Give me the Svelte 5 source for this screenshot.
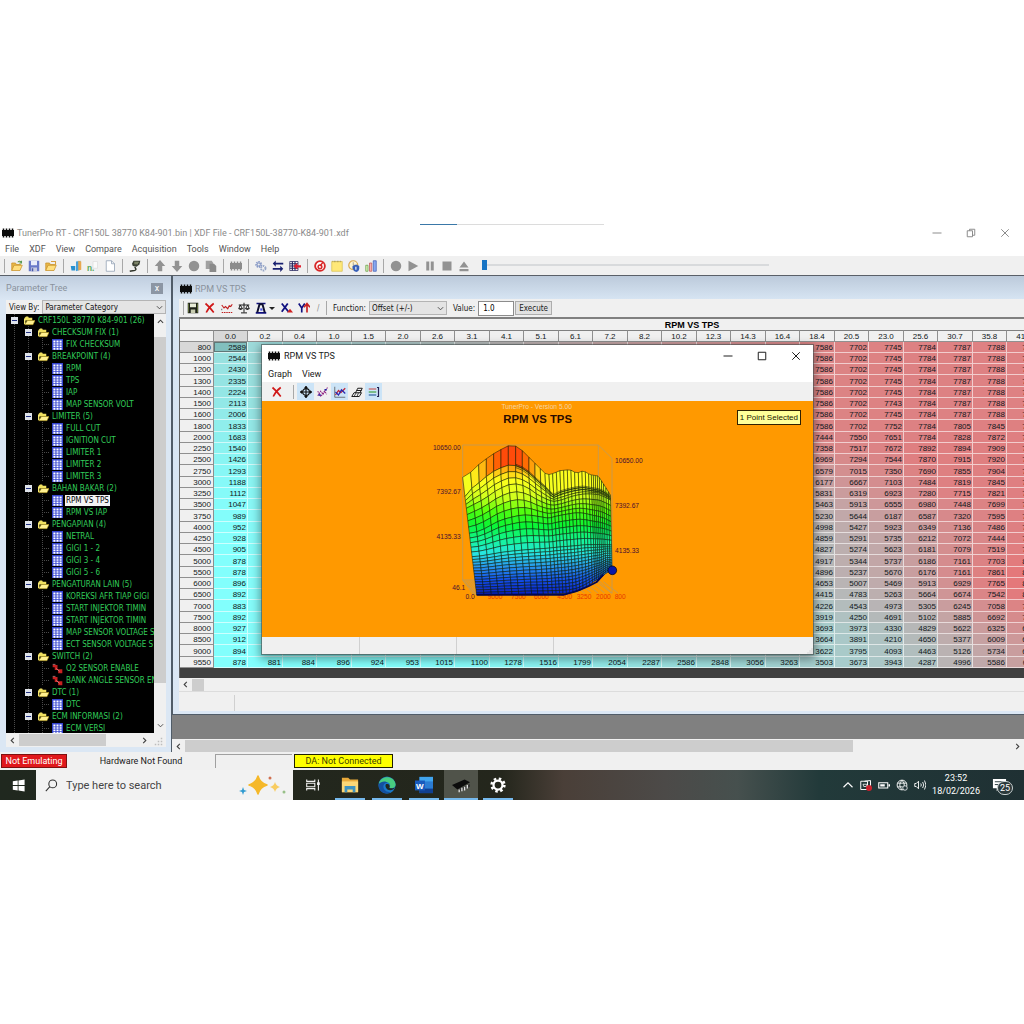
<script lang="ts">
  type TreeItem = { depth: number; text: string; kind: 'folder' | 'table' | 'flag'; selected?: boolean };

  const menus = ['File', 'XDF', 'View', 'Compare', 'Acquisition', 'Tools', 'Window', 'Help'];

  const mainTools = [
    ['open', 'save', 'folder'],
    ['compare', 'replace', 'newdoc'],
    ['plug'],
    ['up', 'down', 'circle', 'copy'],
    ['chipgray'],
    ['gears', 'arrows', 'gridarrow'],
    ['target', 'note', 'info', 'bars'],
    ['circle', 'play', 'pause', 'stop', 'eject']
  ];

  const tree: TreeItem[] = [
    { depth: 0, text: 'CRF150L 38770 K84-901 (26)', kind: 'folder' },
    { depth: 1, text: 'CHECKSUM FIX (1)', kind: 'folder' },
    { depth: 2, text: 'FIX CHECKSUM', kind: 'table' },
    { depth: 1, text: 'BREAKPOINT (4)', kind: 'folder' },
    { depth: 2, text: 'RPM', kind: 'table' },
    { depth: 2, text: 'TPS', kind: 'table' },
    { depth: 2, text: 'IAP', kind: 'table' },
    { depth: 2, text: 'MAP SENSOR VOLT', kind: 'table' },
    { depth: 1, text: 'LIMITER (5)', kind: 'folder' },
    { depth: 2, text: 'FULL CUT', kind: 'table' },
    { depth: 2, text: 'IGNITION CUT', kind: 'table' },
    { depth: 2, text: 'LIMITER 1', kind: 'table' },
    { depth: 2, text: 'LIMITER 2', kind: 'table' },
    { depth: 2, text: 'LIMITER 3', kind: 'table' },
    { depth: 1, text: 'BAHAN BAKAR (2)', kind: 'folder' },
    { depth: 2, text: 'RPM VS TPS', kind: 'table', selected: true },
    { depth: 2, text: 'RPM VS IAP', kind: 'table' },
    { depth: 1, text: 'PENGAPIAN (4)', kind: 'folder' },
    { depth: 2, text: 'NETRAL', kind: 'table' },
    { depth: 2, text: 'GIGI 1 - 2', kind: 'table' },
    { depth: 2, text: 'GIGI 3 - 4', kind: 'table' },
    { depth: 2, text: 'GIGI 5 - 6', kind: 'table' },
    { depth: 1, text: 'PENGATURAN LAIN (5)', kind: 'folder' },
    { depth: 2, text: 'KOREKSI AFR TIAP GIGI', kind: 'table' },
    { depth: 2, text: 'START INJEKTOR TIMIN', kind: 'table' },
    { depth: 2, text: 'START INJEKTOR TIMIN', kind: 'table' },
    { depth: 2, text: 'MAP SENSOR VOLTAGE S', kind: 'table' },
    { depth: 2, text: 'ECT SENSOR VOLTAGE S', kind: 'table' },
    { depth: 1, text: 'SWITCH (2)', kind: 'folder' },
    { depth: 2, text: 'O2 SENSOR ENABLE', kind: 'flag' },
    { depth: 2, text: 'BANK ANGLE SENSOR EN', kind: 'flag' },
    { depth: 1, text: 'DTC (1)', kind: 'folder' },
    { depth: 2, text: 'DTC', kind: 'table' },
    { depth: 1, text: 'ECM INFORMASI (2)', kind: 'folder' },
    { depth: 2, text: 'ECM VERSI', kind: 'table' }
  ];

  const tps = ['0.0', '0.2', '0.4', '1.0', '1.5', '2.0', '2.6', '3.1', '4.1', '5.1', '6.1', '7.2',
    '8.2', '10.2', '12.3', '14.3', '16.4', '18.4', '20.5', '23.0', '25.6', '30.7', '35.8', '41.0'];

  // rpm, value at 0.0, then the values from 18.4 up
  const samples = [
    [800, 2589, 7586, 7702, 7745, 7784, 7787, 7788, 7790],
    [1000, 2544, 7586, 7702, 7745, 7784, 7787, 7788, 7790],
    [1200, 2430, 7586, 7702, 7745, 7784, 7787, 7788, 7790],
    [1300, 2335, 7586, 7702, 7745, 7784, 7787, 7788, 7790],
    [1400, 2224, 7586, 7702, 7745, 7784, 7787, 7788, 7790],
    [1500, 2113, 7586, 7702, 7743, 7784, 7787, 7788, 7790],
    [1600, 2006, 7586, 7702, 7745, 7784, 7787, 7788, 7790],
    [1800, 1833, 7586, 7702, 7752, 7784, 7805, 7845, 7860],
    [2000, 1683, 7444, 7550, 7651, 7784, 7828, 7872, 7880],
    [2250, 1540, 7358, 7517, 7672, 7892, 7894, 7909, 7915],
    [2500, 1426, 6969, 7294, 7544, 7870, 7915, 7920, 7930],
    [2750, 1293, 6579, 7015, 7350, 7690, 7855, 7904, 7925],
    [3000, 1188, 6177, 6667, 7103, 7484, 7819, 7845, 7900],
    [3250, 1112, 5831, 6319, 6923, 7280, 7715, 7821, 7880],
    [3500, 1047, 5463, 5913, 6555, 6980, 7448, 7699, 7860],
    [3750, 989, 5230, 5644, 6187, 6587, 7320, 7595, 7850],
    [4000, 952, 4998, 5427, 5923, 6349, 7136, 7486, 7840],
    [4250, 928, 4859, 5291, 5735, 6212, 7072, 7444, 7850],
    [4500, 905, 4827, 5274, 5623, 6181, 7079, 7519, 7960],
    [5000, 878, 4917, 5344, 5737, 6186, 7161, 7703, 8120],
    [5500, 878, 4896, 5237, 5670, 6176, 7161, 7861, 8310],
    [6000, 896, 4653, 5007, 5469, 5913, 6929, 7765, 8290],
    [6500, 892, 4415, 4783, 5263, 5664, 6674, 7542, 8130],
    [7000, 883, 4226, 4543, 4973, 5305, 6245, 7058, 7640],
    [7500, 892, 3919, 4250, 4691, 5102, 5885, 6692, 7250],
    [8000, 927, 3693, 3973, 4330, 4829, 5622, 6325, 6890],
    [8500, 912, 3664, 3891, 4210, 4650, 5377, 6009, 6540],
    [9000, 894, 3622, 3795, 4093, 4463, 5126, 5734, 6270],
    [9550, 878, 3503, 3673, 3943, 4287, 4996, 5586, 6110]
  ];
  const lastMiddle = [881, 884, 896, 924, 953, 1015, 1100, 1278, 1516, 1799, 2054, 2287, 2586, 2848, 3056, 3263];

  const rows = samples.map(([rpm, first, ...rest]) => {
    const middle = lastMiddle.map((v, i) =>
      rpm === 9550 ? v : Math.round(first + ((rest[0] - first) * (i + 1)) / 17)
    );
    return { rpm, values: [first, ...middle, ...rest] };
  });

  function shade(v: number) {
    const t = Math.min(1, Math.max(0, (v - 878) / 7400));
    const mix = (a: number, b: number) => Math.round(a + (b - a) * t);
    return `rgb(${mix(130, 228)}, ${mix(255, 120)}, ${mix(253, 122)})`;
  }

  // 3D surface: height profiles across the plot, back to front
  const px = [98, 125, 150, 175, 200, 240, 265, 290, 320, 350, 365, 390, 420, 440, 460, 480, 505, 520, 540];
  const profiles = [
    [232, 215, 190, 172, 155, 135, 140, 165, 195, 225, 222, 212, 209, 220, 212, 224, 228, 252, 285],
    [290, 262, 245, 225, 208, 194, 198, 212, 240, 268, 288, 276, 268, 264, 262, 266, 270, 276, 290],
    [325, 312, 300, 285, 268, 252, 252, 262, 285, 300, 305, 300, 290, 285, 282, 282, 284, 290, 300],
    [400, 395, 385, 372, 360, 350, 345, 345, 350, 355, 350, 345, 340, 338, 340, 345, 350, 355, 365],
    [470, 468, 464, 460, 456, 452, 450, 448, 446, 444, 442, 440, 438, 436, 434, 434, 434, 434, 435],
    [530, 530, 528, 526, 524, 522, 520, 520, 518, 516, 514, 512, 508, 504, 500, 494, 488, 480, 478],
    [585, 585, 584, 584, 583, 583, 582, 582, 582, 581, 581, 580, 576, 568, 558, 545, 532, 520, 510]
  ];
  const steps = [1, 3, 4, 5, 7, 7];
  const cols = [98, 122, 146, 169, 191, 213, 235, 257, 277, 297, 315, 331, 345, 357, 368, 379, 390, 401, 412,
    423, 434, 445, 456, 466, 476, 484, 490, 496, 502, 508, 514, 520, 527, 534, 540];

  function sample(curve: number[], x: number) {
    let i = 0;
    while (i < px.length - 2 && px[i + 1] < x) i++;
    const t = (x - px[i]) / (px[i + 1] - px[i]);
    return curve[i] + (curve[i + 1] - curve[i]) * t;
  }

  const stops: [number, number[]][] = [
    [172, [255, 75, 10]], [192, [255, 120, 0]], [215, [255, 195, 20]], [240, [255, 255, 30]],
    [290, [210, 255, 30]], [330, [90, 255, 10]], [375, [10, 245, 50]], [420, [20, 245, 150]],
    [460, [40, 230, 225]], [500, [40, 150, 235]], [540, [20, 80, 235]], [585, [10, 30, 190]]
  ];

  function heat(y: number) {
    if (y <= stops[0][0]) return `rgb(${stops[0][1]})`;
    for (let i = 1; i < stops.length; i++) {
      if (y <= stops[i][0]) {
        const [y0, a] = stops[i - 1];
        const [y1, b] = stops[i];
        return `rgb(${a.map((c, k) => Math.round(c + ((b[k] - c) * (y - y0)) / (y1 - y0)))})`;
      }
    }
    return `rgb(${stops[stops.length - 1][1]})`;
  }

  const mesh: { x: number; y: number }[][] = [];
  profiles.slice(0, -1).forEach((curve, p) => {
    for (let s = 0; s < steps[p]; s++) {
      mesh.push(cols.map((x) => {
        const y = sample(curve, x) + ((sample(profiles[p + 1], x) - sample(curve, x)) * s) / steps[p];
        return { x, y };
      }));
    }
  });
  mesh.push(cols.map((x) => ({ x, y: sample(profiles[6], x) })));

  function lean(x: number, y: number) {
    const shift = 42 - ((x - 98) / 442) * 34;
    return Math.round((x + (shift * Math.max(0, y - 232)) / 353) * 10) / 10;
  }

  const cells = mesh.slice(0, -1).flatMap((line, r) =>
    line.slice(0, -1).map((_, c) => {
      const q = [mesh[r][c], mesh[r][c + 1], mesh[r + 1][c + 1], mesh[r + 1][c]];
      return {
        points: q.map((p) => `${lean(p.x, p.y)},${p.y.toFixed(1)}`).join(' '),
        fill: heat((q[0].y + q[1].y + q[2].y + q[3].y) / 4)
      };
    })
  );

  // folds where the surface turns away behind the ridge
  const folds = [0, 5, 10].map((d) =>
    cols.filter((x) => x > 250).map((x) => {
      const y = sample(profiles[1], x) + d - 4;
      return `${lean(x, y)},${y.toFixed(1)}`;
    }).join(' ')
  );

  const rpmLabels = [
    { x: 173, t: '9000' }, { x: 243, t: '7500' }, { x: 312, t: '6000' },
    { x: 382, t: '4500' }, { x: 440, t: '3250' }, { x: 498, t: '2000' }, { x: 554, t: '800' }
  ];

  let offset = $state('1.0');
  let position = $state(0);
</script>

{#snippet icon(name: string)}
  <svg class="icon" viewBox="0 0 16 16" aria-hidden="true">
    {#if name === 'open' || name === 'folder'}
      <path d="M1 14V4h5l1 2h6v3" fill="#e8b84a" stroke="#c8922a" />
      <path d="M1 14l3-7h11l-3 7z" fill="#ffdf7e" stroke="#c8922a" />
      {#if name === 'open'}
        <path d="M9 3q3-3 5 1M14 1v3h-3" fill="none" stroke="#5a9a50" stroke-width="1.4" />
      {:else}
        <path d="M8 2h6v5" fill="none" stroke="#d8a040" stroke-width="1.4" />
      {/if}
    {:else if name === 'save'}
      <path d="M1 1h14v14H1z" fill="#6878c8" />
      <path d="M4 1h8v6H4z" fill="#e8ecfa" /><path d="M4 10h8v5H4z" fill="#c8cce0" /><path d="M5 11h2v4H5z" fill="#4858a8" />
    {:else if name === 'compare'}
      <path d="M8 2l6-1v12l-6 2z" fill="#48a0d8" /><path d="M11 1l4 1v11l-4 1z" fill="#e8a850" />
      <path d="M1 8h6v6H2z" fill="#2890d0" />
    {:else if name === 'replace'}
      <path d="M8 2h6v9H8z" fill="#fafafa" stroke="#ddd" />
      <text x="0" y="14" font-size="11" font-weight="bold" fill="#58a858" font-family="Liberation Sans">n.</text>
    {:else if name === 'newdoc'}
      <path d="M3 1h7l4 4v10H3z" fill="#fff" stroke="#8c9cb0" /><path d="M10 1v4h4" fill="none" stroke="#8c9cb0" />
    {:else if name === 'plug'}
      <path d="M6 1h9l-1 5-4 3-5-1-1-3z" fill="#3a4034" /><path d="M7 3h6M7 5h5" stroke="#b0b890" />
      <path d="M8 9c0 3 2 2 1 4s-4 1-8 2" fill="none" stroke="#30342a" stroke-width="2" />
    {:else if name === 'up'}
      <path d="M8 0l7 8h-4v7H5V8H1z" fill="#929292" />
    {:else if name === 'down'}
      <path d="M8 16l7-8h-4V1H5v7H1z" fill="#929292" />
    {:else if name === 'circle'}
      <circle cx="8" cy="8" r="7" fill="#929292" />
    {:else if name === 'copy'}
      <path d="M1 1h8l2 3v8H1z" fill="#a0a0a0" /><path d="M6 5h6l3 3v8H6z" fill="#8a8a8a" />
    {:else if name === 'chipgray' || name === 'chip'}
      <path d="M0 4h16v8H0z M1 2h2v12H1z M5 2h2v12H5z M9 2h2v12H9z M13 2h2v12h-2z" fill={name === 'chip' ? '#0c0c0c' : '#8c8c8c'} />
    {:else if name === 'gears'}
      <circle cx="5" cy="6" r="3.4" fill="none" stroke="#8a9cc8" stroke-width="2.4" stroke-dasharray="2 1" />
      <circle cx="11" cy="11" r="3" fill="none" stroke="#98a8c8" stroke-width="2.6" stroke-dasharray="2 1" />
      <circle cx="5" cy="6" r="2" fill="none" stroke="#6a80b8" />
    {:else if name === 'arrows'}
      <path d="M1 4.5l4-4v3h10v2.500H5v3zM15 11.500l-4-4v3H1v2.500h10v3z" fill="#182070" />
    {:else if name === 'gridarrow'}
      <path d="M1 2h11v12H1z" fill="#fff" stroke="#282860" /><path d="M1 5h11M1 8h11M1 11h11M4.500 2v12M8 2v12" stroke="#282860" stroke-width="1.500" />
      <path d="M6 8l5-4v3h5v3h-5v3z" fill="#e02030" />
    {:else if name === 'target'}
      <circle cx="8" cy="8" r="6.500" fill="#fff" stroke="#d82828" stroke-width="2.500" />
      <circle cx="8" cy="9" r="2.500" fill="none" stroke="#d82828" stroke-width="2" /><path d="M8 8l4-5" stroke="#d82828" stroke-width="2" />
    {:else if name === 'note'}
      <path d="M1 2h14v13H1z" fill="#ffe878" stroke="#d8c050" /><path d="M2 2h12" stroke="#a89858" stroke-width="2" stroke-dasharray="1 1" />
    {:else if name === 'info'}
      <circle cx="7" cy="7" r="6" fill="#fff4d0" stroke="#d8a850" stroke-width="1.600" />
      <path d="M7 3v4h3" stroke="#888" fill="none" /><path d="M6 8l5-2 4 2v3q0 4-4 5-4-1-5-5z" fill="#3860b8" /><path d="M10.500 9v4" stroke="#fff" stroke-width="1.500" />
    {:else if name === 'bars'}
      <path d="M1 7h3v8H1z" fill="#d8f0b8" stroke="#68a048" /><path d="M6 4h3v11H6z" fill="#f8b0b0" stroke="#c05858" /><path d="M11 1h4v14h-4z" fill="#88a8f0" stroke="#4060b8" />
    {:else if name === 'play'}
      <path d="M2 1l13 7-13 7z" fill="#929292" />
    {:else if name === 'pause'}
      <path d="M3 2h4v12H3zM9 2h4v12H9z" fill="#929292" />
    {:else if name === 'stop'}
      <path d="M2 2h12v12H2z" fill="#929292" />
    {:else if name === 'eject'}
      <path d="M8 2l6 8H2zM2 12h12v3H2z" fill="#929292" />
    {:else if name === 'floppy'}
      <path d="M1 1h14v14H1z" fill="#1c2018" /><path d="M4 2h8v5H4z" fill="#e8ecd8" /><path d="M5 10h6v5H5z" fill="#c8ccb0" />
      <path d="M2 2v12M14 2v12" stroke="#708040" />
    {:else if name === 'cross'}
      <path d="M2 2q6 5 11 12M13 2Q7 6 3 14" stroke="#d01818" stroke-width="2.200" fill="none" />
    {:else if name === 'trend'}
      <path d="M1 4l3 4 2-2 3 3 2-4 2 1 2-3" fill="none" stroke="#c02020" stroke-width="1.500" /><path d="M1 14h14" stroke="#c02020" stroke-width="1.500" stroke-dasharray="2 1" />
      <path d="M1 9v2" stroke="#333" />
    {:else if name === 'scale'}
      <path d="M8 1v13M4 14.500h8M1 4h14M3 4L1 9h5zM13 4l-3 5h5z" fill="none" stroke="#181818" stroke-width="1.300" /><path d="M1 9q2.500 3 5 0zM10 9q2.500 3 5 0z" fill="#181818" />
    {:else if name === 'area'}
      <path d="M2 2h12M1 14.500h14" stroke="#101080" stroke-width="2.200" />
      <path d="M3 14L6 3h4l3 11" fill="none" stroke="#101030" stroke-width="2.600" /><path d="M7 10h3" stroke="#5058e0" stroke-width="3" />
    {:else if name === 'xaxis'}
      <path d="M1 2l9 11M9 2L1 13" stroke="#101080" stroke-width="2.400" /><path d="M8 14h8l-4-5z" fill="#d02020" />
    {:else if name === 'yaxis'}
      <path d="M1 2l4 6v6M9 2L5 8" stroke="#101080" stroke-width="2.200" fill="none" /><path d="M12 14V3M8 7l4-5 4 5" stroke="#c82020" stroke-width="2.200" fill="none" />
    {:else if name === 'move'}
      <circle cx="8" cy="8" r="4.500" fill="none" stroke="#101010" stroke-width="1.500" />
      <path d="M8 0v16M0 8h16" stroke="#101010" stroke-width="1.500" /><path d="M8 0l3 3H5zM8 16l3-3H5zM0 8l3-3v6zM16 8l-3-3v6z" fill="#101010" />
    {:else if name === 'points'}
      <path d="M1 13l4-6 3 4 6-9M1 7l4 7 5-7 3 4" fill="none" stroke="#902080" stroke-width="1.400" stroke-dasharray="2 1" /><path d="M2 12h3M10 5h3" stroke="#2020a0" stroke-width="2" />
    {:else if name === 'lines'}
      <path d="M1 1v14h14" fill="none" stroke="#505050" /><path d="M2 12l4-6 3 3 6-6" fill="none" stroke="#c02030" stroke-width="1.600" /><path d="M2 8l4 4 4-7 5 5" fill="none" stroke="#2828b0" stroke-width="1.600" />
    {:else if name === 'plane'}
      <path d="M1 14l3-5h10l-3 5zM6 9l3-6h6l-3 6M8 6h6" fill="none" stroke="#181818" stroke-width="1.300" /><path d="M7 9l-3 5M10 9l-2 5" stroke="#181818" />
    {:else if name === 'legend'}
      <path d="M1 4h10" stroke="#c86060" stroke-width="1.600" /><path d="M1 8h10" stroke="#40a040" stroke-width="1.600" /><path d="M1 12h10" stroke="#3060a0" stroke-width="1.600" /><path d="M12 2h2v12h-2" fill="none" stroke="#202050" stroke-width="1.600" />
    {:else if name === 'treefolder'}
      <path d="M1 4l2-2h3l1 2h5v4H1z" fill="#f0e060" /><path d="M1 14l4-6h11l-3 6z" fill="#fff090" stroke="#a89020" /><path d="M1 5v8" stroke="#f8e870" stroke-width="2" />
    {:else if name === 'treetable'}
      <path d="M0 0h16v16H0z" fill="#3444d0" />
      <path d="M2 2h3v3H2zM6.500 2h3v3h-3zM11 2h3v3h-3zM2 6h3v2.500H2zM6.500 6h3v2.500h-3zM11 6h3v2.500h-3zM2 9.500h3V12H2zM6.500 9.500h3V12h-3zM11 9.500h3V12h-3zM2 13h3v2.500H2zM6.500 13h3v2.500h-3zM11 13h3v2.500h-3z" fill="#fff" />
    {:else if name === 'flag'}
      <path d="M1 3h7v6h7v6H9V10H4V6H1z" fill="#c82020" /><path d="M1 2h4M6 8l5 4" stroke="#e8a0a0" />
    {:else if name === 'left'}
      <path d="M11 2L5 8l6 6" fill="none" stroke="#404040" stroke-width="2.500" />
    {:else if name === 'right'}
      <path d="M5 2l6 6-6 6" fill="none" stroke="#404040" stroke-width="2.500" />
    {:else if name === 'chevup'}
      <path d="M2 11l6-6 6 6" fill="none" stroke="#404040" stroke-width="2.500" />
    {:else if name === 'chevdown'}
      <path d="M2 5l6 6 6-6" fill="none" stroke="#404040" stroke-width="2" />
    {:else if name === 'min'}
      <path d="M2 8h12" stroke="currentColor" stroke-width="1.300" />
    {:else if name === 'max'}
      <path d="M3 3h10v10H3z" fill="none" stroke="currentColor" stroke-width="1.300" />
    {:else if name === 'restore'}
      <path d="M3 5h7v8H3zM6 5V3h7v8h-3" fill="none" stroke="currentColor" stroke-width="1.300" />
    {:else if name === 'close'}
      <path d="M3 3l10 10M13 3L3 13" stroke="currentColor" stroke-width="1.300" />
    {:else if name === 'grip'}
      <path d="M13 5h2v2h-2zM9 9h2v2H9zM13 9h2v2h-2zM5 13h2v2H5zM9 13h2v2H9zM13 13h2v2h-2z" fill="#bdbdbd" />
    {/if}
  </svg>
{/snippet}

<div class="desktop">
  <div class="app">
    <div class="progress"><span></span></div>
    <header class="titlebar">
      {@render icon('chip')}
      <span class="title">TunerPro RT - CRF150L 38770 K84-901.bin | XDF File - CRF150L-38770-K84-901.xdf</span>
      <div class="winbuttons">
        <button aria-label="Minimize">{@render icon('min')}</button>
        <button aria-label="Restore">{@render icon('restore')}</button>
        <button aria-label="Close">{@render icon('close')}</button>
      </div>
    </header>

    <nav class="menubar">
      {#each menus as m}
        <button>{m}</button>
      {/each}
    </nav>

    <div class="toolbar">
      {#each mainTools as group}
        <span class="sep"></span>
        {#each group as t}
          <button class="tool" aria-label={t}>{@render icon(t)}</button>
        {/each}
      {/each}
      <input class="slider" type="range" min="0" max="100" bind:value={position} aria-label="Playback position" />
    </div>

    <main class="workspace">
      <aside class="panel">
        <div class="panel-title">
          <span>Parameter Tree</span>
          <button aria-label="Close panel">x</button>
        </div>
        <div class="viewby">
          <label for="viewby">View By:</label>
          <div class="select">
            <select id="viewby"><option>Parameter Category</option></select>
            {@render icon('chevdown')}
          </div>
        </div>
        <div class="tree-area">
          <ul class="tree">
            {#each tree as item}
              <li>
                {#if item.depth > 0}<span class="guide"></span>{/if}
                {#if item.depth > 1}<span class="guide"></span><span class="branch"></span>{:else}
                  <span class="toggle"><i></i></span>
                {/if}
                <span class="node-icon">
                  {@render icon(item.kind === 'folder' ? 'treefolder' : item.kind === 'table' ? 'treetable' : 'flag')}
                </span>
                <span class="label" class:selected={item.selected}>{item.text}</span>
              </li>
            {/each}
          </ul>
          <div class="vscroll">
            {@render icon('chevup')}
            <span class="thumb"></span>
            {@render icon('chevdown')}
          </div>
        </div>
        <div class="hscroll tree-scroll">
          {@render icon('left')}
          <span class="thumb"></span>
          <span class="rest"></span>
          {@render icon('right')}
          {@render icon('grip')}
        </div>
      </aside>

      <section class="mdi">
        <div class="child">
          <div class="child-title">{@render icon('chip')}<span>RPM VS TPS</span></div>
          <div class="child-body">
            <div class="child-tools">
              <span class="sep"></span>
              {#each ['floppy', 'cross', 'trend', 'scale', 'area'] as t}
                <button class="tool" aria-label={t}>{@render icon(t)}</button>
              {/each}
              <span class="caret"></span>
              {#each ['xaxis', 'yaxis'] as t}
                <button class="tool" aria-label={t}>{@render icon(t)}</button>
              {/each}
              <span class="slash">/</span>
              <span class="sep"></span>
              <label for="fn">Function:</label>
              <div class="select fn">
                <select id="fn"><option>Offset (+/-)</option></select>
                {@render icon('chevdown')}
              </div>
              <label for="val">Value:</label>
              <input id="val" class="value" type="text" bind:value={offset} />
              <button class="execute">Execute</button>
            </div>
            <div class="grid">
              <table>
                <caption>RPM VS TPS</caption>
                <thead>
                  <tr>
                    <th class="rowhead"></th>
                    {#each tps as t, i}
                      <th class:active={i === 0}>{t}</th>
                    {/each}
                  </tr>
                </thead>
                <tbody>
                  {#each rows as row, r}
                    <tr>
                      <th class="rowhead" class:active={r === 0}>{row.rpm}</th>
                      {#each row.values as v, c}
                        <td class:current={r === 0 && c === 0} style:background-color={shade(v)}>{v}</td>
                      {/each}
                    </tr>
                  {/each}
                </tbody>
              </table>
            </div>
            <div class="hscroll grid-scroll">
              {@render icon('left')}
              <span class="thumb"></span>
            </div>
            <div class="child-status"><span></span></div>
          </div>
        </div>

        <div class="dialog">
          <div class="dialog-title">
            {@render icon('chip')}
            <span>RPM VS TPS</span>
            <div class="winbuttons">
              <button aria-label="Minimize">{@render icon('min')}</button>
              <button aria-label="Maximize">{@render icon('max')}</button>
              <button aria-label="Close">{@render icon('close')}</button>
            </div>
          </div>
          <nav class="dialog-menu"><button>Graph</button><button>View</button></nav>
          <div class="dialog-tools">
            <button class="tool" aria-label="cross">{@render icon('cross')}</button>
            <span class="sep"></span>
            {#each ['move', 'points', 'lines', 'plane', 'legend'] as t}
              <button class="tool" class:on={t === 'move' || t === 'lines' || t === 'legend'} aria-label={t}>{@render icon(t)}</button>
            {/each}
          </div>
          <div class="canvas">
            <svg viewBox="-504 3 1653 708" role="img" aria-label="RPM VS TPS surface">
              <text x="320" y="27" class="version">TunerPro - Version 5.00</text>
              <text x="323" y="70" class="heading">RPM VS TPS</text>
              <g class="frame">
                <path d="M98 135H505L546 175V580M98 135V540M505 135V540M98 540H505L546 580M98 540l42 45" />
                {#each [0, 1, 2, 3, 4, 5, 6] as n}
                  <path d={`M${100 + n * 6} 542l30 42M${400 + n * 20} 545l44 34`} />
                {/each}
              </g>
              {#each rpmLabels as l}
                <text x={l.x} y="598" class="rpm">{l.t}</text>
              {/each}
              <g class="mesh">
                {#each cells as cell}
                  <polygon points={cell.points} fill={cell.fill} />
                {/each}
                {#each folds as fold}
                  <polyline points={fold} />
                {/each}
              </g>
              <path d="M140 584H400Q450 574 500 546L520 524" class="edge" />
              <g class="axis">
                <text x="92" y="149" text-anchor="end">10650.00</text>
                <text x="92" y="283" text-anchor="end">7392.67</text>
                <text x="92" y="418" text-anchor="end">4135.33</text>
                <text x="555" y="189">10650.00</text>
                <text x="555" y="323">7392.67</text>
                <text x="555" y="458">4135.33</text>
                <text x="106" y="571" text-anchor="end">46.1</text>
                <text x="134" y="598" text-anchor="end">0.0</text>
              </g>
              <circle cx="547" cy="511" r="13" fill="#0818a8" stroke="#000" stroke-width="2" />
            </svg>
            <span class="badge">1 Point Selected</span>
          </div>
          <div class="dialog-status"><span></span><span></span><span></span><i>{@render icon('grip')}</i></div>
        </div>

        <div class="hscroll mdi-scroll">
          {@render icon('left')}
          <span class="thumb"></span>
          <span class="rest"></span>
          {@render icon('right')}
        </div>
      </section>
    </main>

    <footer class="statusbar">
      <span class="emu">Not Emulating</span>
      <span class="hw">Hardware Not Found</span>
      <span class="sunken"></span>
      <span class="da">DA: Not Connected</span>
    </footer>
  </div>

  <div class="taskbar">
    <button class="start" aria-label="Start">
      <svg viewBox="0 0 16 16"><path d="M1 2.800l6-.9v5.600H1zM8 1.800L15.500.7v6.800H8zM1 8.500h6v5.600l-6-.9zM8 8.500h7.500v6.800L8 14.200z" fill="#fff" /></svg>
    </button>
    <div class="search">
      <svg class="lens" viewBox="0 0 16 16"><circle cx="9.500" cy="6" r="4.800" fill="none" stroke="#303030" stroke-width="1.300" /><path d="M6 9.500L1 15" stroke="#303030" stroke-width="1.300" /></svg>
      <input type="text" placeholder="Type here to search" aria-label="Search" />
      <svg class="sparkle" viewBox="0 0 48 20">
        <path d="M19 1q2 7 9 9-7 2-9 9-2-7-9-9 7-2 9-9z" fill="#f5b829" stroke="#f5b829" stroke-width="1.500" stroke-linejoin="round" />
        <path d="M36 7q1 4 5 5-4 1-5 5-1-4-5-5 4-1 5-5z" fill="#f8cc60" />
        <path d="M4 12l1 3 3 1-3 1-1 3-1-3-3-1 3-1z" fill="#2e9ad0" />
        <circle cx="31" cy="3" r="1.500" fill="#d07050" /><circle cx="45" cy="17" r="1.500" fill="#98c088" />
      </svg>
    </div>
    <div class="apps">
      <button class="task" aria-label="Task view">
        <svg viewBox="0 0 20 20"><path d="M3 4v2h9V4M3 16v-2h9v2M3 8h9v4H3zM16 4v12" fill="none" stroke="#f0f0f0" stroke-width="1.200" /><path d="M14.500 7h3v3h-3z" fill="#f0f0f0" /></svg>
      </button>
      <button class="task open" aria-label="File Explorer">
        <svg viewBox="0 0 20 20"><path d="M1 2h7l2 2h9v14H1z" fill="#e8a93a" /><path d="M1 6h18v12H1z" fill="#fbd777" /><path d="M4 11h12v7h-3v-3H7v3H4z" fill="#3f93c0" /></svg>
      </button>
      <button class="task open" aria-label="Edge">
        <svg viewBox="0 0 20 20"><circle cx="10" cy="10" r="9.500" fill="#1a78c8" /><path d="M1 9C2 0 17-2 19.500 9c.5 4-4 5-7 4 2-2 1-6-3-6-4 0-7 1-8.500 2z" fill="#48cc80" /><path d="M1 9c2-3 8-4 10-1-3-1-5 1-5 4 0 4 4 6 8 6C8 22-1 17 1 9z" fill="#1450a0" /><path d="M9 9c3-1 5 2 3.500 4 2 1 5 .8 6.500-.5-2 4-8 4-9.500 1.500C8 12 8 10 9 9z" fill="#20281f" /></svg>
      </button>
      <button class="task open" aria-label="Word">
        <svg viewBox="0 0 20 20"><path d="M5 1h15v18H5z" fill="#2b7cd3" /><path d="M5 1h15v5H5z" fill="#41a5ee" /><path d="M5 14h15v5H5z" fill="#103f91" /><path d="M0 5h11v11H0z" fill="#185abd" /><text x="1" y="14" font-size="9" font-weight="bold" fill="#fff" font-family="Liberation Sans">W</text></svg>
      </button>
      <button class="task open current" aria-label="TunerPro">
        <svg viewBox="0 0 20 20"><path d="M0 10l14-6 6 3-14 8z" fill="#0c0c0c" /><path d="M7 15l13-6v3L8 17z" fill="#333" /><path d="M8 15v3M11 13v4M14 12v4M17 10v4" stroke="#e0e0e0" stroke-width="1.500" /></svg>
      </button>
      <button class="task open" aria-label="Settings">
        <svg viewBox="0 0 20 20"><circle cx="10" cy="10" r="7" fill="none" stroke="#fff" stroke-width="3" stroke-dasharray="2.700 2.800" /><circle cx="10" cy="10" r="5" fill="none" stroke="#fff" stroke-width="2.500" /></svg>
      </button>
    </div>
    <div class="tray">
      <svg viewBox="0 0 16 16"><path d="M2 11l6-6 6 6" fill="none" stroke="#fff" stroke-width="1.500" /></svg>
      <svg viewBox="0 0 16 16"><path d="M1 3h9v11H1zM6 3l8-1v9" fill="none" stroke="#fff" stroke-width="1.300" /><path d="M4 7h5v3H5z" fill="none" stroke="#fff" /><circle cx="12" cy="12" r="4" fill="#c8202c" /></svg>
      <svg viewBox="0 0 16 16"><path d="M1 5h12v7H1z" fill="none" stroke="#fff" stroke-width="1.400" /><path d="M3 7h6v3H3zM14 7h2v3h-2z" fill="#fff" /></svg>
      <svg viewBox="0 0 16 16"><circle cx="8" cy="8" r="6.500" fill="none" stroke="#fff" stroke-width="1.200" /><path d="M2 5.500h12M2 10.500h7M8 1.500q-6 6.500 0 13M8 1.500q4 4 3 8" fill="none" stroke="#fff" stroke-width="1.200" /><circle cx="12" cy="12" r="3" fill="#22353a" stroke="#fff" /></svg>
      <svg viewBox="0 0 16 16"><path d="M1 6h2l3-3v10l-3-3H1zM9 6q1.500 2 0 4M11.500 4q3 4 0 8M14 2q4 6 0 12" fill="none" stroke="#fff" stroke-width="1.200" /></svg>
      <div class="clock"><span>23:52</span><span>18/02/2026</span></div>
      <button class="notify" aria-label="Notifications">
        <svg viewBox="0 0 16 16"><path d="M1 1h14v10H8l-3 3v-3H1z" fill="#fff" /><path d="M3 4h10M3 7h8" stroke="#22353a" /></svg>
        <span>25</span>
      </button>
    </div>
  </div>
</div>

<style>
  :global(body) {
    background: #fff;
  }

  .desktop {
    padding-top: 224px;
    font-family: Roboto, 'Noto Sans', sans-serif;
    font-size: 9px;
    color: #1a1a1a;
    overflow: hidden;
  }

  button {
    padding: 0;
    border: 0;
    background: none;
    font: inherit;
    color: inherit;
  }

  svg {
    display: block;
    flex-shrink: 0;
  }

  .icon {
    width: 12px;
    height: 12px;
  }

  .progress {
    height: 1px;
    margin: 0 41%;
    background: #dcdcdc;
  }

  .progress span {
    display: block;
    width: 20%;
    height: 1px;
    background: #3a78a8;
  }

  .titlebar {
    display: flex;
    align-items: center;
    gap: 3px;
    height: 16px;
    padding: 0 2px;
    color: #8a8a8a;
  }

  .winbuttons {
    display: flex;
    margin-left: auto;
  }

  .winbuttons button {
    display: grid;
    place-items: center;
    width: 34px;
    height: 16px;
  }

  .menubar {
    display: flex;
    align-items: center;
    gap: 10px;
    height: 15px;
    padding-left: 5px;
    color: #555;
  }

  .toolbar {
    display: flex;
    align-items: center;
    height: 19px;
    background: #f0f0f0;
    border-bottom: 1px solid #5a6068;
  }

  .sep {
    width: 1px;
    height: 14px;
    margin: 0 3px 0 4px;
    background: #a8a8a8;
  }

  .tool {
    display: grid;
    place-items: center;
    width: 17px;
    height: 17px;
    flex-shrink: 0;
  }

  .slider {
    appearance: none;
    width: 28%;
    height: 2px;
    margin: 0 0 2px 10px;
    background: #d8dadc;
  }

  .slider::-webkit-slider-thumb {
    appearance: none;
    width: 5px;
    height: 10px;
    background: #1874c4;
  }

  .workspace {
    display: grid;
    grid-template-columns: 172px minmax(0, 1fr);
    font-family: 'DejaVu Sans Condensed', 'DejaVu Sans', sans-serif;
    font-size: 8px;
  }

  .panel {
    padding: 0 5px 5px 6px;
    background: linear-gradient(#c0cedf, #dbe7f4 24px, #dbe7f4);
    border-right: 1px solid #505c68;
  }

  .panel-title {
    display: flex;
    align-items: center;
    justify-content: space-between;
    height: 24px;
    color: #8a929c;
    font-family: Roboto, sans-serif;
    font-size: 9px;
  }

  .panel-title button {
    width: 12px;
    height: 11px;
    margin-right: 3px;
    background: #8c96a4;
    color: #fff;
    line-height: 9px;
  }

  .viewby {
    display: flex;
    align-items: center;
    gap: 3px;
    height: 14px;
    padding-left: 3px;
    background: #f0f0f0;
  }

  .select {
    position: relative;
    flex: 1;
  }

  .select select {
    appearance: none;
    width: 100%;
    height: 14px;
    padding: 0 2px;
    border: 1px solid #b4b4b4;
    border-radius: 0;
    background: #e4e4e4;
    color: #111;
    font: inherit;
  }

  .select .icon {
    position: absolute;
    right: 3px;
    top: 4px;
    width: 7px;
    height: 7px;
  }

  .tree-area {
    display: flex;
    height: 419px;
  }

  .tree {
    flex: 1;
    min-width: 0;
    margin: 0;
    padding: 0 0 0 1px;
    list-style: none;
    background: #000;
    overflow: hidden;
  }

  .tree li {
    display: flex;
    align-items: center;
    height: 12px;
    white-space: nowrap;
    color: #32cd5a;
  }

  .guide,
  .branch,
  .toggle {
    display: grid;
    place-items: center;
    flex: 0 0 14px;
    height: 12px;
    background: repeating-linear-gradient(#4a4a4a 0 1px, #000 1px 2px) center / 1px 100% no-repeat;
  }

  .branch {
    background:
      repeating-linear-gradient(#4a4a4a 0 1px, transparent 1px 2px) center / 1px 100% no-repeat,
      repeating-linear-gradient(90deg, #4a4a4a 0 1px, transparent 1px 2px) right / 7px 1px no-repeat;
  }

  .toggle i {
    display: grid;
    place-items: center;
    width: 7px;
    height: 7px;
    background: #dfe3ea;
  }

  .toggle i::after {
    content: '';
    width: 5px;
    height: 1px;
    background: #203080;
  }

  .node-icon {
    display: grid;
    place-items: center;
    flex: 0 0 16px;
  }

  .node-icon .icon {
    width: 11px;
    height: 11px;
  }

  .label {
    padding: 0 1px;
    line-height: 11px;
  }

  .label.selected {
    background: #f4f4f4;
    color: #000;
  }

  .vscroll {
    display: flex;
    flex-direction: column;
    align-items: center;
    width: 12px;
    padding: 4px 0;
    box-sizing: border-box;
    background: #f0f0f0;
  }

  .vscroll .icon,
  .hscroll .icon {
    width: 7px;
    height: 7px;
  }

  .vscroll .thumb {
    width: 12px;
    height: 346px;
    margin: 12px 0 auto;
    background: #cdcdcd;
  }

  .hscroll {
    display: flex;
    align-items: center;
    gap: 3px;
    height: 12px;
    padding: 0 3px;
    background: #f0f0f0;
  }

  .hscroll .thumb {
    height: 12px;
    background: #cdcdcd;
  }

  .hscroll .rest {
    flex: 1;
  }

  .tree-scroll {
    height: 14px;
  }

  .tree-scroll .thumb {
    width: 87px;
  }

  .tree-scroll .icon:last-child {
    width: 12px;
    height: 12px;
  }

  .mdi {
    position: relative;
    background: #808080;
  }

  .child {
    padding: 0 0 3px 6px;
    background: linear-gradient(#bccadb, #d6e4f2 23px, #dbe7f4);
    border-left: 1px solid #505c68;
    border-bottom: 1px solid #505c68;
  }

  .child-title {
    display: flex;
    align-items: center;
    gap: 3px;
    height: 23px;
    padding: 2px 0 0 1px;
    box-sizing: border-box;
    color: #8a929c;
    font-family: Roboto, sans-serif;
    font-size: 9px;
  }

  .child-body {
    background: #f0f0f0;
  }

  .child-tools {
    display: flex;
    align-items: center;
    height: 18px;
    border-bottom: 2px solid #808080;
  }

  .child-tools .sep {
    margin-right: 0;
  }

  .caret {
    margin-right: 3px;
    border: 3px solid transparent;
    border-top-color: #222;
    border-bottom: 0;
  }

  .slash {
    width: 5px;
    padding-left: 5px;
    color: #888;
  }

  .child-tools label {
    margin: 0 3px 0 6px;
  }

  .select.fn {
    flex: 0 0 78px;
  }

  .value {
    width: 36px;
    height: 15px;
    padding: 0 4px;
    box-sizing: border-box;
    border: 1px solid #8c8c8c;
    font: inherit;
  }

  .execute {
    width: 37px;
    height: 14px;
    margin-left: 1px;
    border: 1px solid #adadad;
    background: #e1e1e1;
  }

  .grid {
    overflow: hidden;
    height: 359px;
    background: #404040;
    border-left: 1px solid #606060;
  }

  table {
    width: max-content;
    border-collapse: separate;
    border-spacing: 0;
    table-layout: fixed;
    background: #f0f0f0;
    font-family: 'Liberation Sans', Arial, sans-serif;
    font-size: 8px;
  }

  caption {
    height: 11px;
    padding-left: 162px;
    background: #f0f0f0;
    font-size: 9px;
    font-weight: bold;
    line-height: 13px;
    color: #000;
  }

  th,
  td {
    width: 34px;
    min-width: 34px;
    height: 11px;
    padding: 1px 1px 0;
    box-sizing: border-box;
    line-height: 9px;
    color: #101820;
    font-weight: normal;
    text-align: right;
    border-right: 1px solid rgba(255, 255, 255, 0.6);
    border-bottom: 1px solid rgba(255, 255, 255, 0.6);
  }

  tbody tr:nth-child(4n) > * {
    height: 12px;
  }

  tr > :nth-child(2n + 3) {
    width: 35px;
    min-width: 35px;
  }

  thead th {
    height: 12px;
    text-align: center;
    border-top: 1px solid #808080;
    border-right: 1px solid #909090;
    border-bottom: 1px solid #909090;
  }

  tbody .rowhead {
    padding-right: 2px;
    border-right: 1px solid #909090;
    border-bottom: 1px solid #909090;
  }

  th.active {
    background: #d8d8d8;
  }

  td.current {
    box-shadow: inset 0 0 0 1px #607878, inset 0 0 0 12px rgba(60, 90, 90, 0.25);
  }

  .grid-scroll {
    height: 13px;
    border-bottom: 1px solid #dcdcdc;
  }

  .grid-scroll .thumb {
    width: 12px;
  }

  .child-status {
    height: 19px;
    padding-top: 3px;
    box-sizing: border-box;
  }

  .child-status span {
    display: block;
    width: 55px;
    height: 16px;
    border-right: 1px solid #d0d0d0;
  }

  .mdi-scroll {
    margin-top: 24px;
    border-top: 1px solid #f0f0f0;
  }

  .mdi-scroll .thumb {
    width: 79%;
  }

  .dialog {
    position: absolute;
    left: 90px;
    top: 69px;
    width: 551px;
    background: #fff;
    outline: 1px solid rgba(70, 80, 80, 0.6);
    box-shadow: 0 3px 9px 2px rgba(0, 0, 0, 0.4);
    font-family: Roboto, sans-serif;
    font-size: 9px;
  }

  .dialog-title {
    display: flex;
    align-items: center;
    gap: 4px;
    height: 21px;
    padding-left: 6px;
  }

  .dialog-menu {
    display: flex;
    align-items: center;
    gap: 10px;
    height: 16px;
    padding-left: 6px;
  }

  .dialog-tools {
    display: flex;
    align-items: center;
    height: 19px;
    padding-left: 6px;
    background: #f0f0f0;
  }

  .dialog-tools .sep {
    margin: 0 3px 0 8px;
  }

  .tool.on {
    background: #cce4f7;
  }

  .canvas {
    position: relative;
    background: #ff9900;
  }

  .canvas svg {
    width: 100%;
    height: 236px;
  }

  .canvas text {
    font-family: 'Liberation Sans', Arial, sans-serif;
    font-size: 20px;
  }

  .canvas .version {
    fill: #f6d4a4;
    text-anchor: middle;
  }

  .canvas .heading {
    fill: #2a0c00;
    font-size: 34px;
    font-weight: bold;
    text-anchor: middle;
  }

  .canvas .rpm {
    fill: #e83800;
  }

  .axis {
    fill: #4a1030;
  }

  .frame path {
    fill: none;
    stroke: #b09c70;
    stroke-width: 2;
  }

  .mesh polygon {
    stroke: rgba(0, 20, 10, 0.75);
    stroke-width: 2;
    stroke-linejoin: round;
  }

  .mesh polyline {
    fill: none;
    stroke: rgba(0, 20, 10, 0.75);
    stroke-width: 2;
  }

  .edge {
    fill: none;
    stroke: #040850;
    stroke-width: 6;
  }

  .badge {
    position: absolute;
    top: 9px;
    right: 12px;
    padding: 0 2px;
    border: 1px solid #302000;
    background: #ffff99;
    color: #202000;
    font-family: 'Liberation Sans', Arial, sans-serif;
    font-size: 8px;
    line-height: 13px;
  }

  .dialog-status {
    display: flex;
    height: 17px;
    padding-left: 1px;
    background: #f0f0f0;
  }

  .dialog-status span {
    flex: 0 0 97px;
    box-sizing: border-box;
    border-right: 1px solid #d0d0d0;
  }

  .dialog-status i {
    margin: auto 0 0 auto;
  }

  .dialog-status .icon {
    width: 8px;
    height: 8px;
  }

  .statusbar {
    display: flex;
    align-items: center;
    height: 18px;
    background: #f0f0f0;
    line-height: 12px;
    text-align: center;
  }

  .emu {
    width: 66px;
    box-sizing: border-box;
    margin-left: 1px;
    border: 1px solid #801010;
    background: #e0181c;
    color: #fff;
  }

  .hw {
    width: 148px;
  }

  .sunken {
    width: 77px;
    height: 14px;
    box-sizing: border-box;
    border-top: 1px solid #a0a0a0;
    border-left: 1px solid #a0a0a0;
  }

  .da {
    width: 99px;
    box-sizing: border-box;
    margin-left: 2px;
    border: 1px solid #202000;
    background: #ffff00;
    color: #404000;
  }

  .taskbar {
    display: flex;
    height: 30px;
    background: linear-gradient(90deg, #20281f 0, #24261c 49%, #4a3f38 55%, #4c4a48 65%, #46504e 72%, #223a3a 80%, #1f3033);
    color: #fff;
  }

  .start {
    display: grid;
    place-items: center;
    width: 36px;
  }

  .start svg,
  .lens {
    width: 13px;
    height: 13px;
  }

  .search {
    display: flex;
    align-items: center;
    width: 257px;
    padding: 0 6px 0 9px;
    box-sizing: border-box;
    background: #f2f2f2;
  }

  .search input {
    flex: 1;
    min-width: 0;
    padding: 0 0 0 8px;
    border: 0;
    background: none;
    font-family: Roboto, sans-serif;
    font-size: 11px;
  }

  .search input::placeholder {
    color: #444;
  }

  .sparkle {
    width: 48px;
    height: 20px;
  }

  .apps {
    display: flex;
    padding-left: 1px;
  }

  .task {
    display: grid;
    place-items: center;
    width: 37px;
    box-sizing: border-box;
  }

  .task svg {
    width: 18px;
    height: 18px;
  }

  .task.open {
    background: linear-gradient(#76b9ed, #76b9ed) center bottom / 30px 2px no-repeat;
  }

  .task.current {
    background:
      linear-gradient(#76b9ed, #76b9ed) center bottom / 34px 2px no-repeat,
      linear-gradient(#50534a, #50534a) center / 34px 100% no-repeat;
  }

  .tray {
    display: flex;
    align-items: center;
    gap: 6px;
    margin-left: auto;
    padding-right: 11px;
  }

  .tray svg {
    width: 12px;
    height: 12px;
  }

  .clock {
    display: flex;
    flex-direction: column;
    align-items: center;
    line-height: 13px;
  }

  .notify {
    position: relative;
    width: 21px;
    height: 20px;
    margin-left: 6px;
  }

  .notify svg {
    width: 15px;
    height: 15px;
  }

  .notify span {
    position: absolute;
    right: 0;
    bottom: 0;
    width: 14px;
    border: 1px solid #c8d0d0;
    border-radius: 7px;
    background: #2c3a3c;
    line-height: 12px;
  }
</style>
